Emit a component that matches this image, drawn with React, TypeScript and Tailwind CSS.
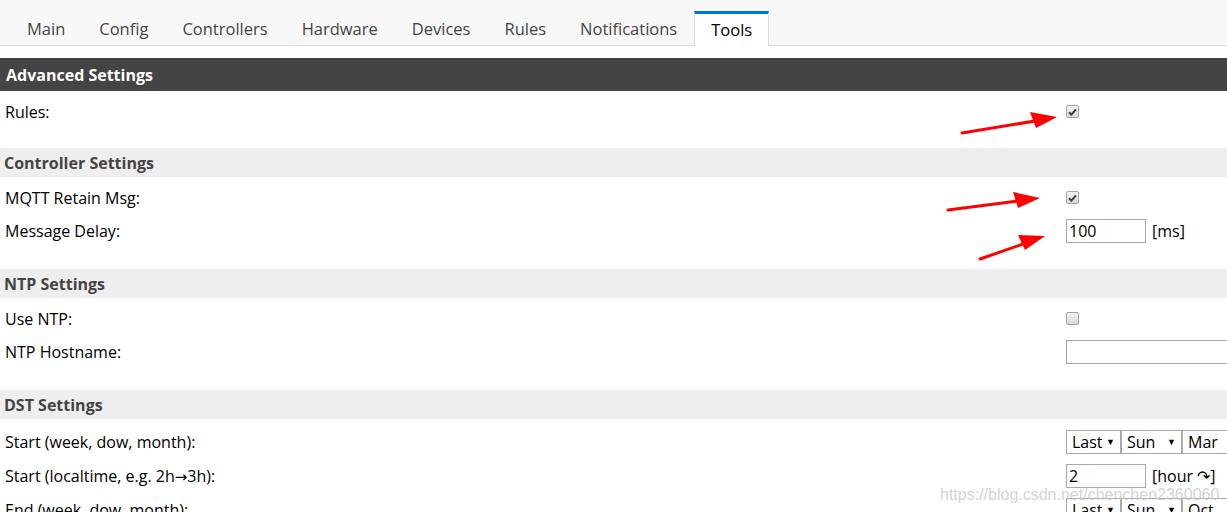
import React from 'react';

const font = { fontFamily: '"Open Sans", "Noto Sans", sans-serif' };

const tabs = ['Main', 'Config', 'Controllers', 'Hardware', 'Devices', 'Rules', 'Notifications', 'Tools'];

function Checkbox({ checked }: { checked?: boolean }) {
    return (
        <span className="inline-flex h-[13px] w-[13px] items-center justify-center rounded-[2px] border border-[#a6a6a6] bg-gradient-to-b from-[#f4f4f4] to-[#d9d9d9]">
            {checked && (
                <svg width="9" height="8" viewBox="0 0 9 8">
                    <path d="M1 4.2 L3.4 6.6 L8 1.4" fill="none" stroke="#3b3b3b" strokeWidth="2" />
                </svg>
            )}
        </span>
    );
}

function TextInput({ value, w = 'w-[80px]' }: { value?: string; w?: string }) {
    return (
        <span className={`inline-flex h-[24px] ${w} items-center border border-[#a9a9a9] bg-white px-[2px] text-[16px] text-black`}>
            {value}
        </span>
    );
}

function Select({ value, w }: { value: string; w: string }) {
    return (
        <span className={`inline-flex h-[24px] ${w} shrink-0 items-center justify-between border border-[#a9a9a9] bg-white pl-[5px] pr-[5px] text-[16px] text-black`}>
            <span>{value}</span>
            <span className="text-[9px]">▼</span>
        </span>
    );
}

function SectionHeader({ title, dark }: { title: string; dark?: boolean }) {
    return (
        <div className={dark
            ? 'flex h-[33px] items-center bg-[#444444] px-[6px] text-[16px] font-bold text-white'
            : 'flex h-[29px] items-center bg-[#eeeeee] px-[4px] text-[16px] font-bold text-[#444444]'}>
            {title}
        </div>
    );
}

function Row({ label, children, tall }: { label: React.ReactNode; children?: React.ReactNode; tall?: boolean }) {
    return (
        <div className={`flex items-center ${tall ? 'h-[34px]' : 'h-[33px]'}`}>
            <div className="w-[1066px] shrink-0 pl-[5px] text-[16px] text-black">{label}</div>
            <div className="flex items-center gap-[6px] whitespace-nowrap">{children}</div>
        </div>
    );
}

export default function App() {
    return (
        <div className="relative h-[512px] w-[1227px] overflow-hidden bg-white" style={font}>
            {/* Tab bar */}
            <div className="flex h-[46px] items-end border-b border-[#dddddd] bg-[#f8f8f8] pl-[10px]">
                {tabs.map(t => (
                    t === 'Tools' ? (
                        <div key={t} className="-mb-px flex h-[35px] items-center border-x border-t-[3px] border-x-[#dddddd] border-t-[#0078d7] bg-white px-[16px] pt-[1px] text-[16.5px] text-black">
                            {t}
                        </div>
                    ) : (
                        <div key={t} className="flex h-[35px] items-center px-[17px] pt-[4px] text-[16.5px] text-[#444444]">
                            {t}
                        </div>
                    )
                ))}
            </div>

            <div className="mt-[12px]">
                <SectionHeader title="Advanced Settings" dark />
                <div className="pb-[20px] pt-[4px]">
                    <Row label="Rules:"><Checkbox checked /></Row>
                </div>

                <SectionHeader title="Controller Settings" />
                <div className="pb-[22px] pt-[4px]">
                    <Row label="MQTT Retain Msg:"><Checkbox checked /></Row>
                    <Row label="Message Delay:"><TextInput value="100" /><span className="text-[16px]">[ms]</span></Row>
                </div>

                <SectionHeader title="NTP Settings" />
                <div className="pb-[22px] pt-[4px]">
                    <Row label="Use NTP:"><Checkbox /></Row>
                    <Row label="NTP Hostname:"><TextInput w="w-[200px]" /></Row>
                </div>

                <SectionHeader title="DST Settings" />
                <div className="pt-[6px]">
                    <Row tall label="Start (week, dow, month):">
                        <span className="flex">
                            <Select value="Last" w="w-[55px]" />
                            <Select value="Sun" w="w-[61px]" />
                            <Select value="Mar" w="w-[60px]" />
                        </span>
                    </Row>
                    <Row tall label={<>Start (localtime, e.g. 2h<span style={{ fontFamily: '"DejaVu Sans", sans-serif' }} className="text-[15px]">→</span>3h):</>}>
                        <TextInput value="2" /><span className="text-[16px]">[hour ↷]</span>
                    </Row>
                    <Row tall label="End (week, dow, month):">
                        <span className="flex">
                            <Select value="Last" w="w-[55px]" />
                            <Select value="Sun" w="w-[61px]" />
                            <Select value="Oct" w="w-[60px]" />
                        </span>
                    </Row>
                </div>
            </div>

            {/* annotation arrows */}
            <svg className="pointer-events-none absolute left-0 top-0" width="1227" height="512">
                <g fill="#ff0000" stroke="#ff0000" strokeLinecap="round">
                    <line x1="962" y1="133" x2="1035" y2="121" strokeWidth="3" />
                    <polygon points="1057,117 1030,112 1036,128" stroke="none" />
                    <line x1="948" y1="210" x2="1018" y2="201" strokeWidth="3" />
                    <polygon points="1040,198 1013,192 1018,208" stroke="none" />
                    <line x1="980" y1="259" x2="1026" y2="243" strokeWidth="3" />
                    <polygon points="1045,236 1018,235 1025,250" stroke="none" />
                </g>
            </svg>

            {/* watermark */}
            <div className="pointer-events-none absolute left-[940px] top-[483px] text-[16px] text-[#c8c8c8]/80" style={{ fontFamily: '"Liberation Sans", Arial, sans-serif' }}>
                https://blog.csdn.net/chenchen2360060
            </div>
        </div>
    );
}
